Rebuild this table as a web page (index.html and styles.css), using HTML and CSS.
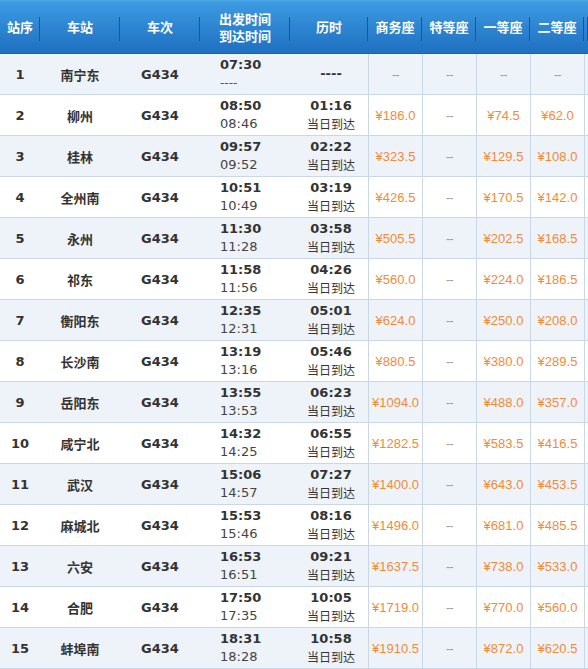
FILE: index.html
```html
<!DOCTYPE html>
<html lang="zh-CN">
<head>
<meta charset="utf-8">
<title>G434 时刻表</title>
<link rel="stylesheet" href="styles.css">
</head>
<body>
<table class="sched">
  <colgroup>
    <col class="c-no"><col class="c-st"><col class="c-tr"><col class="c-tm"><col class="c-du">
    <col class="c-pr"><col class="c-pr"><col class="c-pr"><col class="c-pr"><col class="c-more">
  </colgroup>
  <thead>
    <tr>
      <th>站序</th><th>车站</th><th>车次</th><th class="two"><span>出发时间</span><span>到达时间</span></th><th>历时</th>
      <th>商务座</th><th>特等座</th><th>一等座</th><th>二等座</th><th></th>
    </tr>
  </thead>
  <tbody>
    <tr class="odd">
      <td class="no">1</td><td class="st">南宁东</td><td class="tr">G434</td>
      <td class="tm"><b>07:30</b><span class="dash">----</span></td>
      <td class="du"><b>----</b></td>
      <td class="pr"><i>--</i></td><td class="pr"><i>--</i></td><td class="pr"><i>--</i></td><td class="pr"><i>--</i></td><td class="pr"></td>
    </tr>
    <tr>
      <td class="no">2</td><td class="st">柳州</td><td class="tr">G434</td>
      <td class="tm"><b>08:50</b><span>08:46</span></td>
      <td class="du"><b>01:16</b><span>当日到达</span></td>
      <td class="pr">¥186.0</td><td class="pr"><i>--</i></td><td class="pr">¥74.5</td><td class="pr">¥62.0</td><td class="pr"></td>
    </tr>
    <tr class="odd">
      <td class="no">3</td><td class="st">桂林</td><td class="tr">G434</td>
      <td class="tm"><b>09:57</b><span>09:52</span></td>
      <td class="du"><b>02:22</b><span>当日到达</span></td>
      <td class="pr">¥323.5</td><td class="pr"><i>--</i></td><td class="pr">¥129.5</td><td class="pr">¥108.0</td><td class="pr"></td>
    </tr>
    <tr>
      <td class="no">4</td><td class="st">全州南</td><td class="tr">G434</td>
      <td class="tm"><b>10:51</b><span>10:49</span></td>
      <td class="du"><b>03:19</b><span>当日到达</span></td>
      <td class="pr">¥426.5</td><td class="pr"><i>--</i></td><td class="pr">¥170.5</td><td class="pr">¥142.0</td><td class="pr"></td>
    </tr>
    <tr class="odd">
      <td class="no">5</td><td class="st">永州</td><td class="tr">G434</td>
      <td class="tm"><b>11:30</b><span>11:28</span></td>
      <td class="du"><b>03:58</b><span>当日到达</span></td>
      <td class="pr">¥505.5</td><td class="pr"><i>--</i></td><td class="pr">¥202.5</td><td class="pr">¥168.5</td><td class="pr"></td>
    </tr>
    <tr>
      <td class="no">6</td><td class="st">祁东</td><td class="tr">G434</td>
      <td class="tm"><b>11:58</b><span>11:56</span></td>
      <td class="du"><b>04:26</b><span>当日到达</span></td>
      <td class="pr">¥560.0</td><td class="pr"><i>--</i></td><td class="pr">¥224.0</td><td class="pr">¥186.5</td><td class="pr"></td>
    </tr>
    <tr class="odd">
      <td class="no">7</td><td class="st">衡阳东</td><td class="tr">G434</td>
      <td class="tm"><b>12:35</b><span>12:31</span></td>
      <td class="du"><b>05:01</b><span>当日到达</span></td>
      <td class="pr">¥624.0</td><td class="pr"><i>--</i></td><td class="pr">¥250.0</td><td class="pr">¥208.0</td><td class="pr"></td>
    </tr>
    <tr>
      <td class="no">8</td><td class="st">长沙南</td><td class="tr">G434</td>
      <td class="tm"><b>13:19</b><span>13:16</span></td>
      <td class="du"><b>05:46</b><span>当日到达</span></td>
      <td class="pr">¥880.5</td><td class="pr"><i>--</i></td><td class="pr">¥380.0</td><td class="pr">¥289.5</td><td class="pr"></td>
    </tr>
    <tr class="odd">
      <td class="no">9</td><td class="st">岳阳东</td><td class="tr">G434</td>
      <td class="tm"><b>13:55</b><span>13:53</span></td>
      <td class="du"><b>06:23</b><span>当日到达</span></td>
      <td class="pr">¥1094.0</td><td class="pr"><i>--</i></td><td class="pr">¥488.0</td><td class="pr">¥357.0</td><td class="pr"></td>
    </tr>
    <tr>
      <td class="no">10</td><td class="st">咸宁北</td><td class="tr">G434</td>
      <td class="tm"><b>14:32</b><span>14:25</span></td>
      <td class="du"><b>06:55</b><span>当日到达</span></td>
      <td class="pr">¥1282.5</td><td class="pr"><i>--</i></td><td class="pr">¥583.5</td><td class="pr">¥416.5</td><td class="pr"></td>
    </tr>
    <tr class="odd">
      <td class="no">11</td><td class="st">武汉</td><td class="tr">G434</td>
      <td class="tm"><b>15:06</b><span>14:57</span></td>
      <td class="du"><b>07:27</b><span>当日到达</span></td>
      <td class="pr">¥1400.0</td><td class="pr"><i>--</i></td><td class="pr">¥643.0</td><td class="pr">¥453.5</td><td class="pr"></td>
    </tr>
    <tr>
      <td class="no">12</td><td class="st">麻城北</td><td class="tr">G434</td>
      <td class="tm"><b>15:53</b><span>15:46</span></td>
      <td class="du"><b>08:16</b><span>当日到达</span></td>
      <td class="pr">¥1496.0</td><td class="pr"><i>--</i></td><td class="pr">¥681.0</td><td class="pr">¥485.5</td><td class="pr"></td>
    </tr>
    <tr class="odd">
      <td class="no">13</td><td class="st">六安</td><td class="tr">G434</td>
      <td class="tm"><b>16:53</b><span>16:51</span></td>
      <td class="du"><b>09:21</b><span>当日到达</span></td>
      <td class="pr">¥1637.5</td><td class="pr"><i>--</i></td><td class="pr">¥738.0</td><td class="pr">¥533.0</td><td class="pr"></td>
    </tr>
    <tr>
      <td class="no">14</td><td class="st">合肥</td><td class="tr">G434</td>
      <td class="tm"><b>17:50</b><span>17:35</span></td>
      <td class="du"><b>10:05</b><span>当日到达</span></td>
      <td class="pr">¥1719.0</td><td class="pr"><i>--</i></td><td class="pr">¥770.0</td><td class="pr">¥560.0</td><td class="pr"></td>
    </tr>
    <tr class="odd">
      <td class="no">15</td><td class="st">蚌埠南</td><td class="tr">G434</td>
      <td class="tm"><b>18:31</b><span>18:28</span></td>
      <td class="du"><b>10:58</b><span>当日到达</span></td>
      <td class="pr">¥1910.5</td><td class="pr"><i>--</i></td><td class="pr">¥872.0</td><td class="pr">¥620.5</td><td class="pr"></td>
    </tr>
  </tbody>
</table>
</body>
</html>
```

FILE: styles.css
```css
html, body {
  margin: 0;
  padding: 0;
  overflow: hidden;
  background: #ffffff;
}

.sched {
  border-collapse: separate;
  border-spacing: 0;
  table-layout: fixed;
  width: 588px;
  color: #333333;
  font-family: "DejaVu Sans", "Noto Sans CJK SC", sans-serif;
  font-size: 13px;
}

.c-no { width: 40px; }
.c-st { width: 80px; }
.c-tr { width: 80px; }
.c-tm { width: 90px; }
.c-du { width: 78px; }
.c-pr { width: 54px; }
.c-more { width: 4px; }

.sched th {
  box-sizing: border-box;
  height: 54px;
  padding: 0;
  color: #ffffff;
  font-family: "Noto Sans CJK SC", sans-serif;
  font-weight: bold;
  font-size: 13px;
  line-height: 16px;
  text-align: center;
  vertical-align: middle;
  background:
    linear-gradient(#1b5796, #1b5796) right 17px / 1px 24px no-repeat,
    linear-gradient(#4fa8e6 0, #3d9be1 4%, #2f88d3 45%, #1f70c1 100%);
  border-bottom: 1px solid #1a62ad;
}

.sched th.two span {
  display: block;
  line-height: 17px;
}

.sched td {
  box-sizing: border-box;
  height: 41px;
  padding: 0;
  text-align: center;
  vertical-align: middle;
  border-bottom: 1px solid #c9d7e6;
  background: #ffffff;
}

.sched tr.odd td {
  background: #eef2f9;
}

.no {
  font-weight: bold;
}

.st {
  font-family: "Noto Sans CJK SC", sans-serif;
  font-weight: bold;
  font-size: 13px;
}

.tr {
  font-weight: bold;
}

.sched td.tm {
  text-align: left;
  padding-left: 20px;
  line-height: 18px;
}

.tm b, .du b {
  display: block;
  font-weight: bold;
}

.tm span {
  display: block;
  color: #444444;
}

.tm span.dash {
  color: #555555;
  font-size: 12px;
}

.sched td.du {
  line-height: 18px;
  padding-left: 4px;
}

.du span {
  display: block;
  font-family: "Noto Sans CJK SC", sans-serif;
  font-size: 12px;
  color: #333333;
}

.sched td.pr {
  border-left: 1px solid #c9d7e6;
  font-family: "Liberation Sans", Arial, sans-serif;
  font-size: 13px;
  color: #f18c36;
}

.pr i {
  font-style: normal;
  font-size: 12px;
  color: #9a9a9a;
  letter-spacing: -0.5px;
}
```
